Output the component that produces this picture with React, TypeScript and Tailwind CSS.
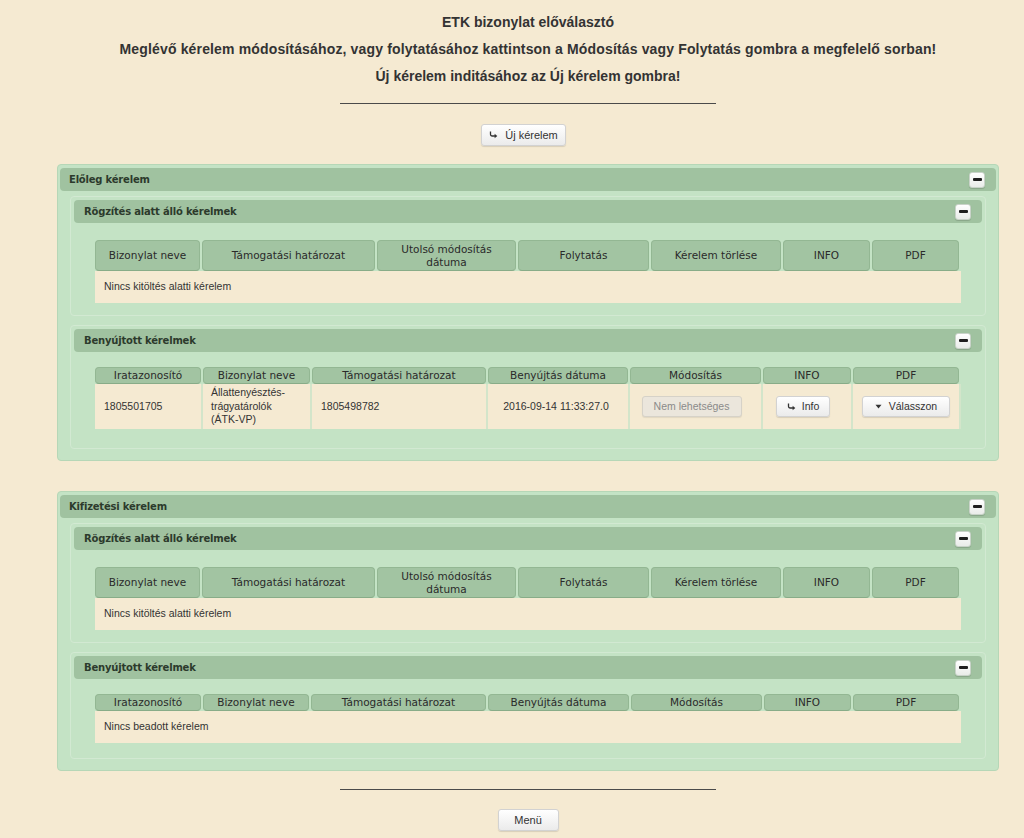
import React from "react";

const ARIAL = "font-['Liberation_Sans',Arial,sans-serif]";
const VERD = "font-['DejaVu_Sans',Verdana,sans-serif]";

const Arrow = () => (
  <svg width="9" height="8" viewBox="0 0 9 8" className="shrink-0">
    <path d="M1.5 0.5 V3.6 Q1.5 5 3 5 H6" stroke="#333" strokeWidth="1.3" fill="none" />
    <path d="M5.6 2.8 L8.3 5 L5.6 7.2 Z" fill="#333" />
  </svg>
);

const Caret = () => (
  <svg width="7" height="5" viewBox="0 0 7 5" className="shrink-0">
    <path d="M0.5 0.8 H6.5 L3.5 4.5 Z" fill="#333" />
  </svg>
);

const Minus = () => (
  <div className="w-4 h-4 rounded-[3px] border border-[#c9d3c9] bg-linear-to-b from-white to-[#e9ece9] flex items-center justify-center shadow-[0_1px_1px_rgba(0,0,0,0.15)]">
    <div className="w-[9px] h-[3px] bg-[#1f1f1f] rounded-[1px]" />
  </div>
);

const Btn = ({ children, className = "" }: { children: React.ReactNode; className?: string }) => (
  <div
    className={`h-[22px] flex items-center justify-center gap-[6px] rounded-[3px] border border-[#d2d2d2] bg-linear-to-b from-white to-[#ebebeb] shadow-[0_1px_1px_rgba(0,0,0,0.12)] text-[#333] ${ARIAL} ${className}`}
  >
    {children}
  </div>
);

const Bar = ({ title, indent }: { title: string; indent?: boolean }) => (
  <div
    className={`h-[23px] bg-[#a0c2a0] rounded-[4px] flex items-center justify-between ${indent ? "pl-[10px]" : "pl-[9px]"} pr-[11px]`}
  >
    <span className={`${VERD} font-bold text-[10px] tracking-[-0.2px] text-[#2c3a2c]`}>{title}</span>
    <Minus />
  </div>
);

const HeadCell = ({ children, tall }: { children: React.ReactNode; tall?: boolean }) => (
  <div
    className={`${tall ? "h-[31px] leading-[13px]" : "h-[17px] leading-[15px]"} bg-[#a2c4a2] border border-[#93b793] border-b-[#88ac88] rounded-[4px] flex items-center justify-center text-center ${VERD} text-[10.5px] text-[#2a2a2a]`}
  >
    <span>{children}</span>
  </div>
);

const colsA = "grid-cols-[105px_173px_139px_131px_130px_87px_87px]";
const colsB = "grid-cols-[106px_107px_174px_140px_131px_88px_106px]";
const colsC = "grid-cols-[106px_106px_175px_141px_131px_87px_106px]";

const PendingTable = () => (
  <div>
    <div className={`grid ${colsA} gap-x-[2px]`}>
      <HeadCell tall>Bizonylat neve</HeadCell>
      <HeadCell tall>Támogatási határozat</HeadCell>
      <HeadCell tall>
        Utolsó módosítás
        <br />
        dátuma
      </HeadCell>
      <HeadCell tall>Folytatás</HeadCell>
      <HeadCell tall>Kérelem törlése</HeadCell>
      <HeadCell tall>INFO</HeadCell>
      <HeadCell tall>PDF</HeadCell>
    </div>
    <div className={`h-[32px] bg-[#f5ead2] flex items-center pl-[9px] ${ARIAL} text-[10.5px] text-[#333]`}>
      Nincs kitöltés alatti kérelem
    </div>
  </div>
);

const SubmittedHead = ({ cols }: { cols: string }) => (
  <div className={`grid ${cols} gap-x-[2px]`}>
    <HeadCell>Iratazonosító</HeadCell>
    <HeadCell>Bizonylat neve</HeadCell>
    <HeadCell>Támogatási határozat</HeadCell>
    <HeadCell>Benyújtás dátuma</HeadCell>
    <HeadCell>Módosítás</HeadCell>
    <HeadCell>INFO</HeadCell>
    <HeadCell>PDF</HeadCell>
  </div>
);

const SubmittedTable = () => (
  <div>
    <SubmittedHead cols={colsB} />
    <div className={`grid ${colsB} gap-x-[2px] bg-[#d3e5ca] ${ARIAL} text-[10.5px] text-[#333]`}>
      <div className="h-[45px] bg-[#f5ead2] flex items-center pl-[9px]">1805501705</div>
      <div className="h-[45px] bg-[#f5ead2] flex items-center pl-[8px] leading-[13.5px]">
        <span>
          Állattenyésztés-
          <br />
          trágyatárolók
          <br />
          (ÁTK-VP)
        </span>
      </div>
      <div className="h-[45px] bg-[#f5ead2] flex items-center pl-[9px]">1805498782</div>
      <div className="h-[45px] bg-[#f5ead2] flex items-center justify-center pr-[4px]">2016-09-14 11:33:27.0</div>
      <div className="h-[45px] bg-[#f5ead2] flex items-center justify-center pr-[8px]">
        <div className="w-[100px] h-[21px] rounded-[3px] border border-[#d6d2c8] bg-[#ebe6dc] flex items-center justify-center text-[#8a8a8a] shadow-[0_1px_1px_rgba(0,0,0,0.08)]">
          Nem lehetséges
        </div>
      </div>
      <div className="h-[45px] bg-[#f5ead2] flex items-center justify-center pr-[8px]">
        <Btn className="w-[54px] !h-[21px] text-[10.5px]">
          <Arrow />
          <span>Info</span>
        </Btn>
      </div>
      <div className="h-[45px] bg-[#f5ead2] flex items-center justify-center">
        <Btn className="w-[88px] !h-[21px] text-[10.5px] gap-[7px]">
          <Caret />
          <span>Válasszon</span>
        </Btn>
      </div>
    </div>
  </div>
);

const EmptySubmitted = () => (
  <div>
    <SubmittedHead cols={colsC} />
    <div className={`h-[32px] bg-[#f5ead2] flex items-center pl-[9px] ${ARIAL} text-[10.5px] text-[#333]`}>
      Nincs beadott kérelem
    </div>
  </div>
);

const Inner = ({
  title,
  children,
  pt,
  pb,
}: {
  title: string;
  children: React.ReactNode;
  pt: string;
  pb: string;
}) => (
  <div className="border border-[#d2e9d2] rounded-[4px] p-[3px]">
    <Bar title={title} indent />
    <div className={`px-[21px] ${pt} ${pb}`}>{children}</div>
  </div>
);

const Outer = ({ title, children }: { title: string; children: React.ReactNode }) => (
  <div className="mx-[25px] self-stretch border border-[#b6d7b7] bg-[#c4e3c5] rounded-[4px] px-[2px] pt-[3px] pb-[2px]">
    <Bar title={title} />
    <div className="px-[10px] pt-[5px] pb-[9px] flex flex-col gap-[9px]">{children}</div>
  </div>
);

export default function App() {
  return (
    <div className={`min-h-[838px] bg-[#f5ead2] pl-[32px] flex flex-col items-center ${ARIAL}`}>
      <div className="pt-[9px] text-center font-bold text-[14px] leading-[27px] text-[#333]">
        <p>ETK bizonylat előválasztó</p>
        <p className="tracking-[0.15px]">
          Meglévő kérelem módosításához, vagy folytatásához kattintson a Módosítás vagy Folytatás gombra a megfelelő sorban!
        </p>
        <p>Új kérelem inditásához az Új kérelem gombra!</p>
      </div>
      <div className="mt-[13px] w-[376px] h-px bg-[#4a4a4a]" />
      <Btn className="mt-[20px] mr-[9px] w-[85px] text-[11px] gap-[7px]">
        <Arrow />
        <span>Új kérelem</span>
      </Btn>

      <div className="mt-[18px] self-stretch flex flex-col">
        <Outer title="Előleg kérelem">
          <Inner title="Rögzítés alatt álló kérelmek" pt="pt-[17px]" pb="pb-[9px]">
            <PendingTable />
          </Inner>
          <Inner title="Benyújtott kérelmek" pt="pt-[15px]" pb="pb-[16px]">
            <SubmittedTable />
          </Inner>
        </Outer>
      </div>

      <div className="mt-[30px] self-stretch flex flex-col">
        <Outer title="Kifizetési kérelem">
          <Inner title="Rögzítés alatt álló kérelmek" pt="pt-[17px]" pb="pb-[9px]">
            <PendingTable />
          </Inner>
          <Inner title="Benyújtott kérelmek" pt="pt-[15px]" pb="pb-[12px]">
            <EmptySubmitted />
          </Inner>
        </Outer>
      </div>

      <div className="mt-[18px] w-[376px] h-px bg-[#4a4a4a]" />
      <Btn className="mt-[19px] w-[61px] text-[11px]">
        <span>Menü</span>
      </Btn>
    </div>
  );
}
